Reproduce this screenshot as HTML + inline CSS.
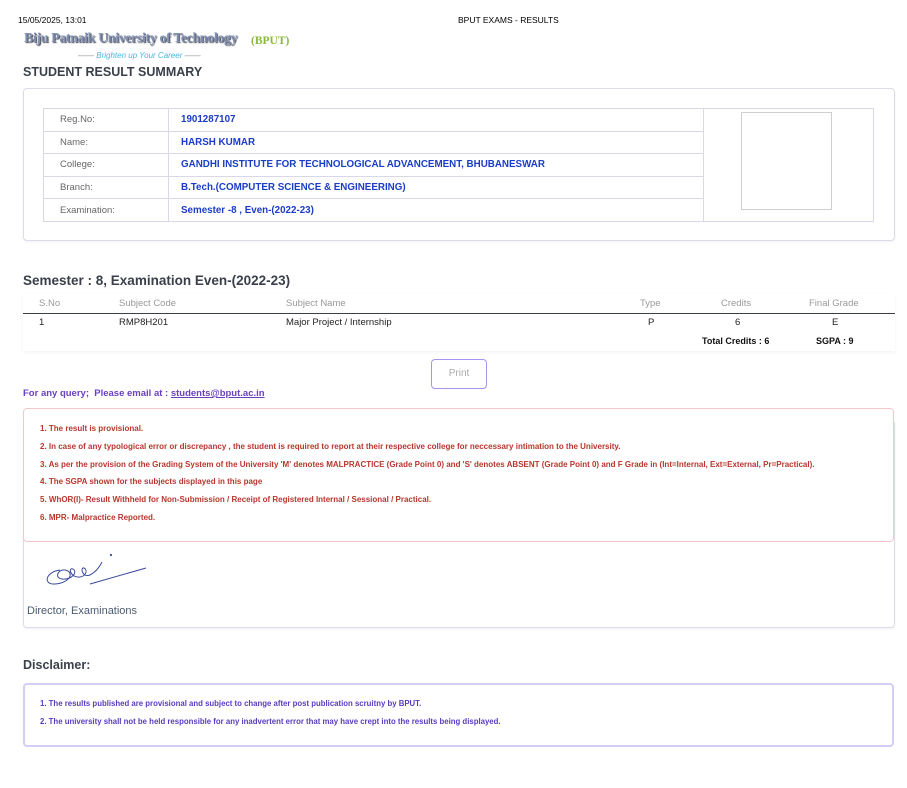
<!DOCTYPE html>
<html><head><meta charset="utf-8"><style>
*{margin:0;padding:0;box-sizing:border-box}
body{width:907px;height:788px;background:#fff;font-family:"Liberation Sans",Arial,sans-serif;position:relative;overflow:hidden;color:#333}
.a{position:absolute;white-space:nowrap}
.card{position:absolute;border:1px solid #dcdce6;border-radius:4px;box-shadow:0 1px 2px rgba(0,0,0,.06)}
table.info{position:absolute;left:43px;top:108px;width:831px;border-collapse:collapse}
table.info td{border:1px solid #d8d8e6;height:22.6px;font-size:9.5px;padding:0 0 0 16px}
table.info td.l{width:125px;color:#666}
table.info td.v{color:#1a3cc8;font-weight:bold;padding-left:12px;font-size:9.8px}
.red{color:#b8362c;font-size:8px;font-weight:bold}
.pur{color:#5a3bc0;font-size:7.8px;font-weight:bold}
.th{color:#999;font-size:9.5px}
.td{color:#222;font-size:9.5px}
</style></head><body>
<div class="a" style="left:18px;top:15px;font-size:8.5px;color:#000">15/05/2025, 13:01</div>
<div class="a" style="left:458px;top:15px;font-size:8.5px;color:#000">BPUT EXAMS - RESULTS</div>
<div class="a" style="left:24px;top:31px;font-family:'Liberation Serif',serif;font-weight:bold;font-size:14px;color:#7e8fb0;text-shadow:1px 1px 1px #445;letter-spacing:-0.4px">Biju Patnaik University of Technology</div>
<div class="a" style="left:251px;top:35px;font-family:'Liberation Serif',serif;font-weight:bold;font-size:11.5px;color:#8ab83a">(BPUT)</div>
<div class="a" style="left:78px;top:51px;font-size:8px;color:#49b6e0;font-style:italic"><span style="color:#999">—— </span>Brighten up Your Career<span style="color:#999"> ——</span></div>
<div class="a" style="left:23px;top:65px;font-size:12.5px;font-weight:bold;color:#3a3f4a">STUDENT RESULT SUMMARY</div>
<div class="card" style="left:23px;top:88px;width:872px;height:153px"></div>
<table class="info">
<tr><td class="l">Reg.No:</td><td class="v">1901287107</td><td rowspan="5" style="width:170px;padding:0;position:relative"><div style="position:absolute;left:37px;top:3px;width:91px;height:98px;border:1px solid #cfcfcf"></div></td></tr>
<tr><td class="l">Name:</td><td class="v">HARSH KUMAR</td></tr>
<tr><td class="l">College:</td><td class="v">GANDHI INSTITUTE FOR TECHNOLOGICAL ADVANCEMENT, BHUBANESWAR</td></tr>
<tr><td class="l">Branch:</td><td class="v">B.Tech.(COMPUTER SCIENCE &amp; ENGINEERING)</td></tr>
<tr><td class="l">Examination:</td><td class="v">Semester -8 , Even-(2022-23)</td></tr>
</table>
<div class="a" style="left:23px;top:273px;font-size:13.5px;font-weight:bold;color:#3a3f4a">Semester : 8, Examination Even-(2022-23)</div>
<div class="a" style="left:23px;top:294px;width:872px;height:57px;box-shadow:0 1px 3px rgba(0,0,0,.06)"></div>
<div class="a th" style="left:39px;top:298px">S.No</div>
<div class="a th" style="left:119px;top:298px">Subject Code</div>
<div class="a th" style="left:286px;top:298px">Subject Name</div>
<div class="a th" style="left:640px;top:298px">Type</div>
<div class="a th" style="left:721px;top:298px">Credits</div>
<div class="a th" style="left:809px;top:298px">Final Grade</div>
<div class="a" style="left:23px;top:313px;width:872px;height:1px;background:#3a3f4a"></div>
<div class="a td" style="left:39px;top:317px">1</div>
<div class="a td" style="left:119px;top:317px">RMP8H201</div>
<div class="a td" style="left:286px;top:317px">Major Project / Internship</div>
<div class="a td" style="left:648px;top:317px">P</div>
<div class="a td" style="left:735px;top:317px">6</div>
<div class="a td" style="left:832px;top:317px">E</div>
<div class="a" style="left:702px;top:336px;font-size:9px;font-weight:bold;color:#111">Total Credits : 6</div>
<div class="a" style="left:816px;top:336px;font-size:9px;font-weight:bold;color:#111">SGPA : 9</div>
<div class="a" style="left:431px;top:359px;width:56px;height:30px;border:1.5px solid #a993f0;border-radius:4px;text-align:center;line-height:27px;font-size:10px;color:#aaa">Print</div>
<div class="a" style="left:23px;top:388px;font-size:9.5px;color:#6a3fc0;font-weight:bold">For any query;&nbsp; Please email at : <span style="text-decoration:underline">students@bput.ac.in</span></div>
<div class="card" style="left:23px;top:420px;width:872px;height:208px"></div>
<div class="a" style="left:23px;top:408px;width:871px;height:134px;border:1px solid #f2c8cc;border-radius:4px;background:#fff"></div>
<div class="a red" style="left:40px;top:424px">1. The result is provisional.</div>
<div class="a red" style="left:40px;top:442px">2. In case of any typological error or discrepancy , the student is required to report at their respective college for neccessary intimation to the University.</div>
<div class="a red" style="left:40px;top:460px">3. As per the provision of the Grading System of the University 'M' denotes MALPRACTICE (Grade Point 0) and 'S' denotes ABSENT (Grade Point 0) and F Grade in (Int=Internal, Ext=External, Pr=Practical).</div>
<div class="a red" style="left:40px;top:477px">4. The SGPA shown for the subjects displayed in this page</div>
<div class="a red" style="left:40px;top:495px">5. WhOR(I)- Result Withheld for Non-Submission / Receipt of Registered Internal / Sessional / Practical.</div>
<div class="a red" style="left:40px;top:513px">6. MPR- Malpractice Reported.</div>
<svg class="a" style="left:40px;top:550px" width="110" height="50" viewBox="0 0 110 50"><g fill="none" stroke="#3a4a9a" stroke-width="1"><path d="M20 20 C5 22 3 35 15 34 C30 33 35 22 25 20 C18 19 14 28 22 29 C32 30 38 22 33 19 C28 17 30 28 40 27 C46 26 48 20 44 18 C40 17 42 28 50 25 C56 22 60 16 62 12"/><path d="M50 34 L106 18"/><circle cx="71" cy="5" r="0.6"/></g></svg>
<div class="a" style="left:27px;top:605px;font-size:11px;color:#4a5a70">Director, Examinations</div>
<div class="a" style="left:23px;top:658px;font-size:12.5px;font-weight:bold;color:#3a3f4a">Disclaimer:</div>
<div class="a" style="left:23px;top:683px;width:871px;height:64px;border:2px solid #d4cef6;border-radius:4px"></div>
<div class="a pur" style="left:40px;top:699px">1. The results published are provisional and subject to change after post publication scruitny by BPUT.</div>
<div class="a pur" style="left:40px;top:717px">2. The university shall not be held responsible for any inadvertent error that may have crept into the results being displayed.</div>
</body></html>
